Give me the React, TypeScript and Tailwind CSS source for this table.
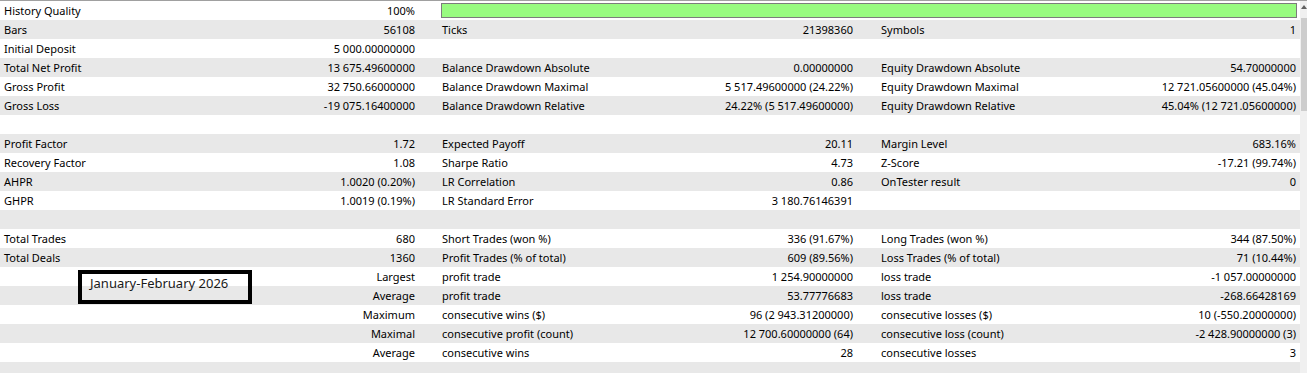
import React from "react";

type Cell = [string, string];
type Row = { c1?: Cell; c2?: Cell; c3?: Cell; bar?: boolean };

const rows: Row[] = [
  { c1: ["History Quality", "100%"], bar: true },
  { c1: ["Bars", "56108"], c2: ["Ticks", "21398360"], c3: ["Symbols", "1"] },
  { c1: ["Initial Deposit", "5 000.00000000"] },
  {
    c1: ["Total Net Profit", "13 675.49600000"],
    c2: ["Balance Drawdown Absolute", "0.00000000"],
    c3: ["Equity Drawdown Absolute", "54.70000000"],
  },
  {
    c1: ["Gross Profit", "32 750.66000000"],
    c2: ["Balance Drawdown Maximal", "5 517.49600000 (24.22%)"],
    c3: ["Equity Drawdown Maximal", "12 721.05600000 (45.04%)"],
  },
  {
    c1: ["Gross Loss", "-19 075.16400000"],
    c2: ["Balance Drawdown Relative", "24.22% (5 517.49600000)"],
    c3: ["Equity Drawdown Relative", "45.04% (12 721.05600000)"],
  },
  {},
  { c1: ["Profit Factor", "1.72"], c2: ["Expected Payoff", "20.11"], c3: ["Margin Level", "683.16%"] },
  { c1: ["Recovery Factor", "1.08"], c2: ["Sharpe Ratio", "4.73"], c3: ["Z-Score", "-17.21 (99.74%)"] },
  { c1: ["AHPR", "1.0020 (0.20%)"], c2: ["LR Correlation", "0.86"], c3: ["OnTester result", "0"] },
  { c1: ["GHPR", "1.0019 (0.19%)"], c2: ["LR Standard Error", "3 180.76146391"] },
  {},
  {
    c1: ["Total Trades", "680"],
    c2: ["Short Trades (won %)", "336 (91.67%)"],
    c3: ["Long Trades (won %)", "344 (87.50%)"],
  },
  {
    c1: ["Total Deals", "1360"],
    c2: ["Profit Trades (% of total)", "609 (89.56%)"],
    c3: ["Loss Trades (% of total)", "71 (10.44%)"],
  },
  { c1: ["", "Largest"], c2: ["profit trade", "1 254.90000000"], c3: ["loss trade", "-1 057.00000000"] },
  { c1: ["", "Average"], c2: ["profit trade", "53.77776683"], c3: ["loss trade", "-268.66428169"] },
  {
    c1: ["", "Maximum"],
    c2: ["consecutive wins ($)", "96 (2 943.31200000)"],
    c3: ["consecutive losses ($)", "10 (-550.20000000)"],
  },
  {
    c1: ["", "Maximal"],
    c2: ["consecutive profit (count)", "12 700.60000000 (64)"],
    c3: ["consecutive loss (count)", "-2 428.90000000 (3)"],
  },
  { c1: ["", "Average"], c2: ["consecutive wins", "28"], c3: ["consecutive losses", "3"] },
  {},
];

const Pair = ({ cell, width }: { cell?: Cell; width: string }) => (
  <div className={`flex justify-between shrink-0 ${width}`}>
    <span>{cell?.[0]}</span>
    <span>{cell?.[1]}</span>
  </div>
);

export default function App() {
  return (
    <div
      className="relative h-[373px] w-[1307px] overflow-hidden border-t border-[#a0a0a0] bg-white text-[11px] leading-[19px] text-black"
      style={{ fontFamily: '"Noto Sans", "Liberation Sans", sans-serif' }}
    >
      <div className="flex">
        {/* Table */}
        <div className="w-[1300px] shrink-0">
          {rows.map((r, i) => (
            <div
              key={i}
              className={`flex h-[19px] pl-[4px] whitespace-nowrap ${i % 2 ? "bg-[#e8e8e8]" : "bg-white"}`}
            >
              <Pair cell={r.c1} width="w-[411px]" />
              {r.bar ? (
                <div className="ml-[26px] mt-[2px] h-[15px] w-[856px] border border-[#7c7c7c] bg-[#98fb80]" />
              ) : (
                <>
                  <div className="w-[27px] shrink-0" />
                  <Pair cell={r.c2} width="w-[411px]" />
                  <div className="w-[28px] shrink-0" />
                  <Pair cell={r.c3} width="w-[415px]" />
                </>
              )}
            </div>
          ))}
        </div>

        {/* Scrollbar */}
        <div className="flex h-[373px] w-[7px] shrink-0 flex-col bg-[#f0f0f0]">
          <div className="flex h-[17px] items-start justify-end pt-[4px]">
            <svg width="6" height="4" viewBox="0 0 6 4">
              <path d="M0 4 L3 0 L6 4 Z" fill="#606060" />
            </svg>
          </div>
          <div className="ml-[1px] h-[93px] bg-[#cdcdcd]" />
        </div>
      </div>

      {/* Annotation box */}
      <div className="absolute left-[78px] top-[269px] h-[34px] w-[174px] border-4 border-black pl-[8px]">
        <span className="text-[13px] leading-[18px] text-[#1a1a1a]">January-February 2026</span>
      </div>
    </div>
  );
}
